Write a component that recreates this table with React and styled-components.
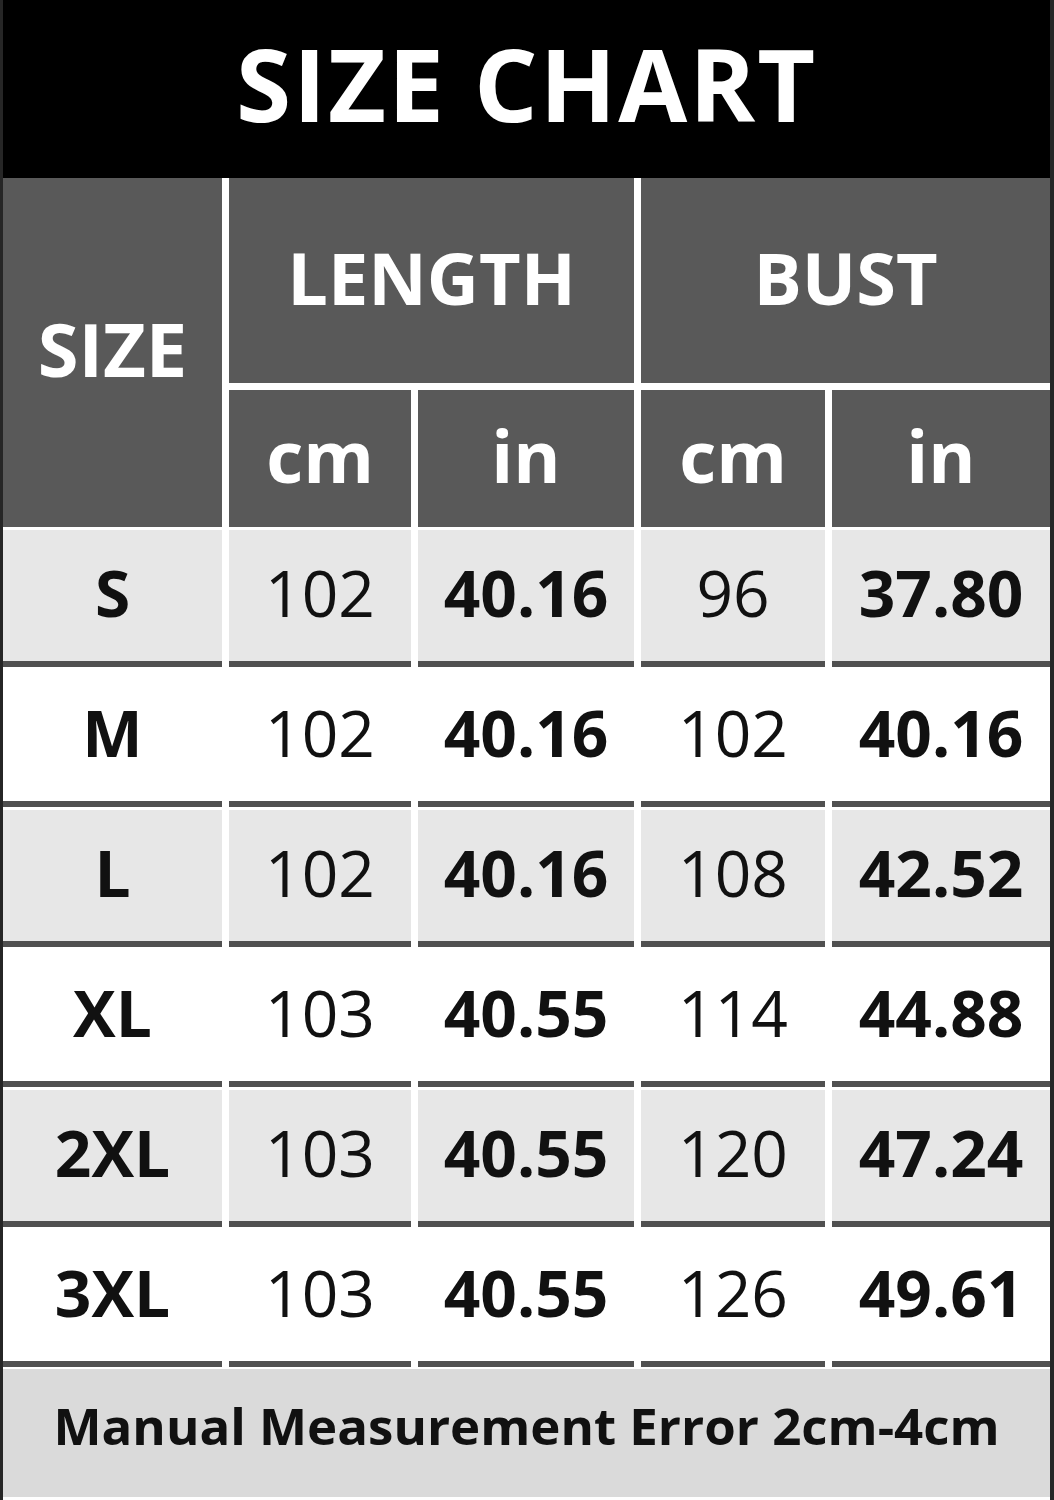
import React from "react";
import styled, { createGlobalStyle } from "styled-components";

const GlobalStyle = createGlobalStyle`
  html, body {
    margin: 0;
    padding: 0;
    background: #ffffff;
  }
  body {
    font-family: "Open Sans", "DejaVu Sans", sans-serif;
  }
`;

const COLS = "219px 182px 216px 184px 1fr";

const Chart = styled.div`
  width: 1054px;
  box-sizing: border-box;
  border-left: 3px solid #262626;
  border-right: 4px solid #262626;
  border-bottom: 5px solid #262626;
  background: #ffffff;
`;

const TitleBar = styled.div`
  box-sizing: border-box;
  height: 178px;
  background: #000000;
  color: #ffffff;
  display: flex;
  align-items: center;
  justify-content: center;
  font-size: 100px;
  font-weight: 700;
  letter-spacing: 2px;
  padding: 0 0 12px 0;
  line-height: 1;
`;

const Header = styled.div`
  display: grid;
  grid-template-columns: ${COLS};
  grid-template-rows: 205px 137px;
  column-gap: 7px;
  row-gap: 7px;
  background: #ffffff;
`;

const HeadCell = styled.div`
  box-sizing: border-box;
  background: #595959;
  color: #ffffff;
  font-weight: 700;
  font-size: ${(p) => p.$size || 72}px;
  display: flex;
  align-items: center;
  justify-content: center;
  grid-column: ${(p) => p.$col || "auto"};
  grid-row: ${(p) => p.$row || "auto"};
  line-height: 1;
  padding-bottom: 8px;
`;

const Row = styled.div`
  display: grid;
  grid-template-columns: ${COLS};
  column-gap: 7px;
  height: 140px;
`;

const Cell = styled.div`
  box-sizing: border-box;
  height: 140px;
  border-top: 3px solid #ffffff;
  border-bottom: 6px solid #505050;
  background: ${(p) => (p.$shade ? "#e7e7e7" : "#ffffff")};
  color: #111111;
  font-size: 64px;
  font-weight: ${(p) => (p.$bold ? 700 : 400)};
  display: flex;
  align-items: center;
  justify-content: center;
  line-height: 1;
  padding-bottom: 6px;
`;

const Footer = styled.div`
  box-sizing: border-box;
  height: 133px;
  border-top: 2px solid #ffffff;
  border-bottom: 3px solid #ffffff;
  background: #dadada;
  color: #111111;
  font-size: 51px;
  font-weight: 700;
  display: flex;
  align-items: center;
  justify-content: center;
  line-height: 1;
  padding-bottom: 16px;
`;

const rows = [
  ["S", "102", "40.16", "96", "37.80"],
  ["M", "102", "40.16", "102", "40.16"],
  ["L", "102", "40.16", "108", "42.52"],
  ["XL", "103", "40.55", "114", "44.88"],
  ["2XL", "103", "40.55", "120", "47.24"],
  ["3XL", "103", "40.55", "126", "49.61"],
];

export default function App() {
  return (
    <>
      <GlobalStyle />
      <Chart>
        <TitleBar>SIZE CHART</TitleBar>
        <Header>
          <HeadCell $col="1" $row="1 / span 2" $size={74}>
            SIZE
          </HeadCell>
          <HeadCell $col="2 / span 2" $row="1">
            LENGTH
          </HeadCell>
          <HeadCell $col="4 / span 2" $row="1">
            BUST
          </HeadCell>
          <HeadCell $col="2" $row="2">cm</HeadCell>
          <HeadCell $col="3" $row="2">in</HeadCell>
          <HeadCell $col="4" $row="2">cm</HeadCell>
          <HeadCell $col="5" $row="2">in</HeadCell>
        </Header>
        {rows.map((r, i) => (
          <Row key={r[0]}>
            {r.map((v, j) => (
              <Cell key={j} $shade={i % 2 === 0} $bold={j === 0 || j === 2 || j === 4}>
                {v}
              </Cell>
            ))}
          </Row>
        ))}
        <Footer>Manual Measurement Error 2cm-4cm</Footer>
      </Chart>
    </>
  );
}
